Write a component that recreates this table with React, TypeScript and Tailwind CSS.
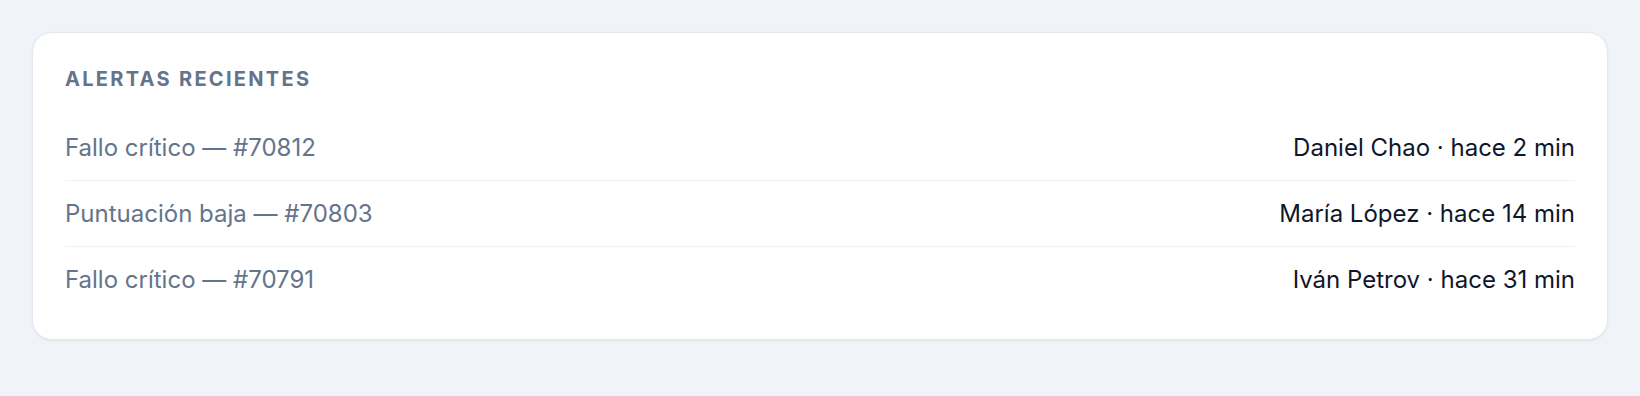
import React from 'react';

type Alert = { title: string; who: string; when: string };

const alerts: Alert[] = [
  { title: 'Fallo crítico — #70812', who: 'Daniel Chao', when: 'hace 2 min' },
  { title: 'Puntuación baja — #70803', who: 'María López', when: 'hace 14 min' },
  { title: 'Fallo crítico — #70791', who: 'Iván Petrov', when: 'hace 31 min' },
];

const App: React.FC = () => {
  return (
    <div className="min-h-screen bg-[#f0f4f8] p-8 font-['Inter','Noto_Sans',sans-serif]">
      <div className="rounded-[20px] border border-[#e2e8f0] bg-white px-8 pt-8 pb-[27px] shadow-[0_1px_3px_rgba(15,23,42,0.06)]">
        <h2 className="text-[20px] leading-7 font-bold uppercase tracking-[2.3px] text-[#64748b]">
          Alertas recientes
        </h2>
        <ul className="mt-[22px]">
          {alerts.map((a, idx) => (
            <li
              key={idx}
              className={
                'flex items-center justify-between py-4 text-[24px] leading-[33px] ' +
                (idx < alerts.length - 1 ? 'border-b border-[#eef2f6]' : '')
              }
            >
              <span className="text-[#64748b]">{a.title}</span>
              <span className="text-[#0f172a]">
                {a.who} · {a.when}
              </span>
            </li>
          ))}
        </ul>
      </div>
    </div>
  );
};

export default App;
